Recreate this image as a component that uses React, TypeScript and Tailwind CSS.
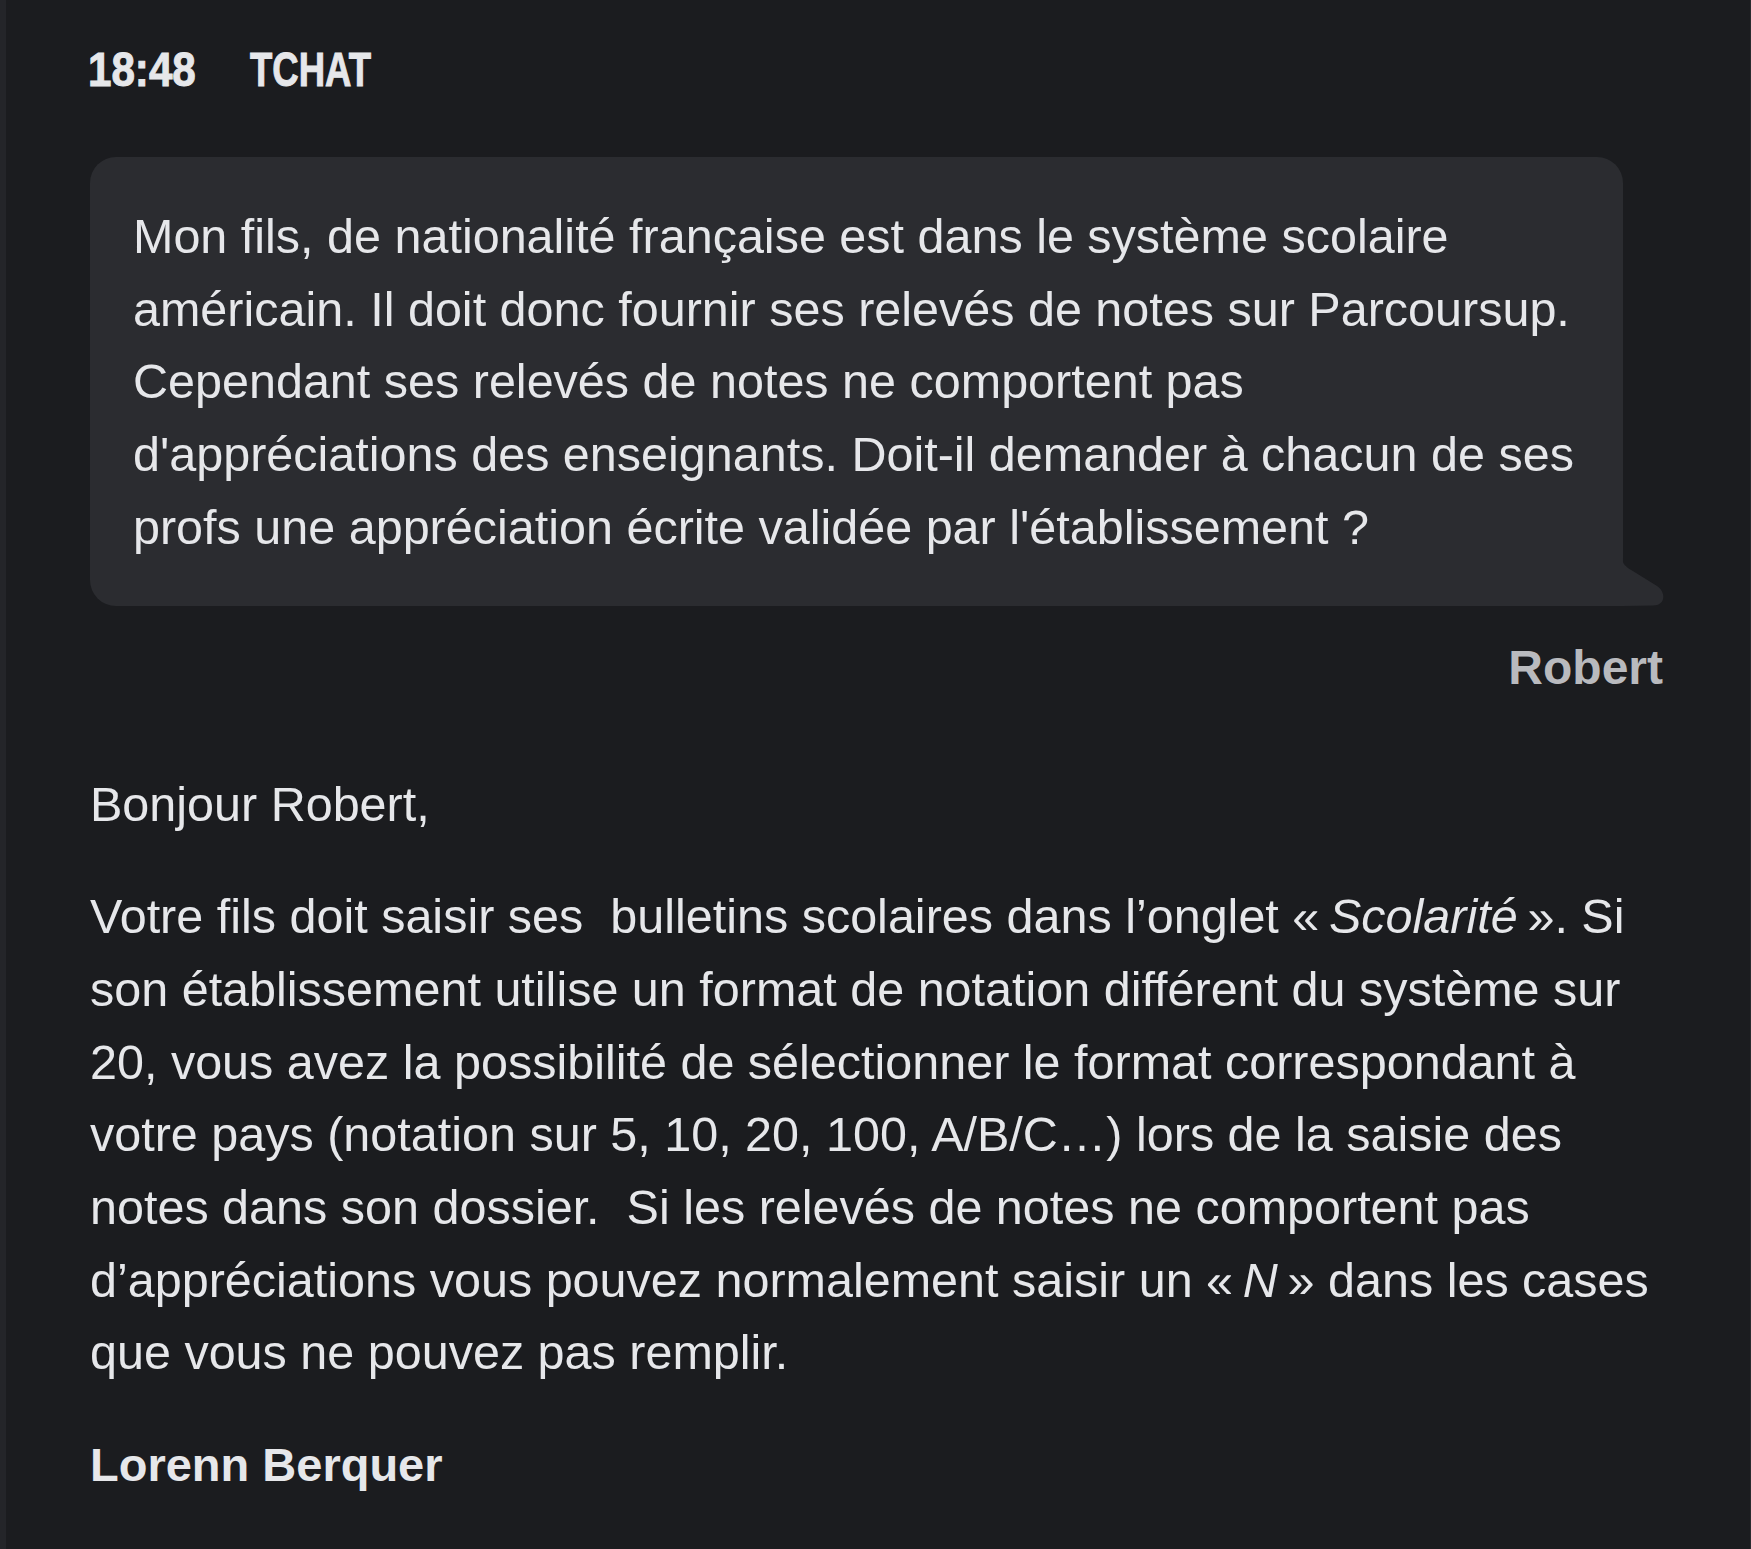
import React from "react";

const body = "font-['Liberation_Sans',Arial,sans-serif]";

export default function App() {
  return (
    <div className={`min-h-screen w-full bg-[#1b1c1f] border-l-[6px] border-l-[#242529] border-r border-r-[#2a2b2f] ${body} text-[#e6e7ea]`}>
      <div className="pl-[84px] pr-[85px] pt-[45px] pb-[40px]">
        {/* Header */}
        <div className="flex items-start gap-[53px] font-bold text-[49px] leading-[49px] whitespace-nowrap [-webkit-text-stroke:1px_#e6e7ea]">
          <div className="w-[108px]">
            <span className="inline-block origin-left scale-x-[0.86] -ml-[2px]">18:48</span>
          </div>
          <div className="w-[123px]">
            <span className="inline-block origin-left scale-x-[0.745] -ml-[1px]">TCHAT</span>
          </div>
        </div>

        {/* Question bubble */}
        <div className="relative mt-[63px] mr-[42px] rounded-[26px] rounded-br-none bg-[#2b2c30] pl-[43px] pr-[30px] pt-[43px] pb-[42px] text-[48.5px] leading-[72.7px]">
          <div className="whitespace-nowrap">Mon fils, de nationalité française est dans le système scolaire</div>
          <div className="whitespace-nowrap">américain. Il doit donc fournir ses relevés de notes sur Parcoursup.</div>
          <div className="whitespace-nowrap">Cependant ses relevés de notes ne comportent pas</div>
          <div className="whitespace-nowrap">d'appréciations des enseignants. Doit-il demander à chacun de ses</div>
          <div className="whitespace-nowrap">profs une appréciation écrite validée par l'établissement ?</div>
          <svg
            className="absolute left-full bottom-0 -ml-px"
            width="44"
            height="48"
            viewBox="0 0 44 48"
            aria-hidden="true"
          >
            <path d="M0 0 C0.5 6 4 9 10 12.5 L35 28 C44 34 44 47.5 31 47.5 L0 48 Z" fill="#2b2c30" />
          </svg>
        </div>

        {/* Sender */}
        <div className="mt-[38px] text-right font-bold text-[48px] leading-[48px] text-[#b9babe] pr-[2px]">Robert</div>

        {/* Answer */}
        <div className="mt-[76px] text-[48.5px] leading-[72.7px]">
          <p className="whitespace-nowrap">Bonjour Robert,</p>
          <div className="mt-[40px]">
            <div className="whitespace-nowrap">
              Votre fils doit saisir ses{"\u00a0"} bulletins scolaires dans l’onglet «{"\u202f"}<em className="italic">Scolarité</em>{"\u202f"}». Si
            </div>
            <div className="whitespace-nowrap">son établissement utilise un format de notation différent du système sur</div>
            <div className="whitespace-nowrap">20, vous avez la possibilité de sélectionner le format correspondant à</div>
            <div className="whitespace-nowrap">votre pays (notation sur 5, 10, 20, 100, A/B/C…) lors de la saisie des</div>
            <div className="whitespace-nowrap">notes dans son dossier.{"\u00a0"} Si les relevés de notes ne comportent pas</div>
            <div className="whitespace-nowrap">
              d’appréciations vous pouvez normalement saisir un «{"\u202f"}<em className="italic">N</em>{"\u202f"}» dans les cases
            </div>
            <div className="whitespace-nowrap">que vous ne pouvez pas remplir.</div>
          </div>
          <p className="mt-[40px] font-bold text-[47px] whitespace-nowrap">Lorenn Berquer</p>
        </div>
      </div>
    </div>
  );
}
